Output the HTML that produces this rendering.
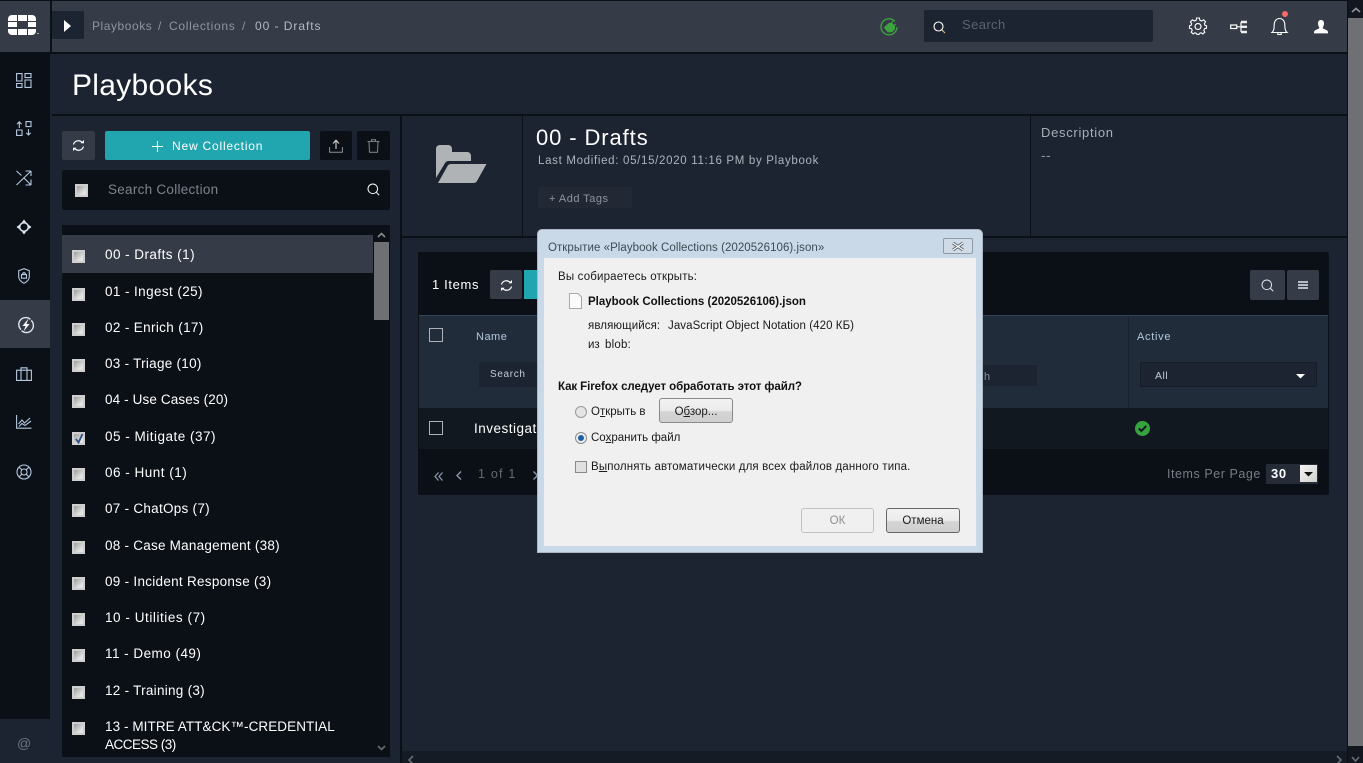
<!DOCTYPE html>
<html><head><meta charset="utf-8">
<style>
html,body{margin:0;padding:0;width:1363px;height:763px;overflow:hidden;background:#1c2331}
body{position:relative;font-family:"Liberation Sans",sans-serif;color:#fff}
.b{position:absolute}
.t{position:absolute;white-space:nowrap;line-height:18px;font-size:13.5px;letter-spacing:.4px}
.cb{position:absolute;left:72px;width:9px;height:9px;border:2px solid #cfcfcf;background:linear-gradient(135deg,#9c9c9c,#e4e4e4 75%);}
.d{position:absolute;white-space:nowrap;color:#1a1a1a;font-size:11.5px;line-height:14px}
svg{position:absolute;overflow:visible}
.s{fill:none;stroke:#b4c8e0;stroke-width:1.1}
u{text-decoration:underline}
.btn{position:absolute;background:#353b47;border-radius:2px}
.dk{position:absolute;background:#0b0f16;border-radius:2px}
.wb{position:absolute;border:1px solid #8a8a8a;border-radius:3px;background:linear-gradient(#f2f2f2 0,#ebebeb 50%,#d5d5d5 55%,#cfcfcf 100%);text-align:center;color:#1a1a1a;font-size:11.5px;box-sizing:border-box}
</style></head><body>

<!-- header -->
<div class="b" style="left:0;top:0;width:1363px;height:1px;background:#0b0f16"></div>
<div class="b" style="left:0;top:1px;width:1348px;height:51px;background:#353b47"></div>
<div class="b" style="left:50px;top:0;width:2px;height:52px;background:#0b0f16"></div>
<div class="b" style="left:0;top:52px;width:1348px;height:2px;background:#0b0f16"></div>
<!-- logo -->
<div class="b" style="left:8px;top:15px;width:9px;height:6px;background:#fff;border-radius:4px 0 0 0"></div>
<div class="b" style="left:18px;top:15px;width:9px;height:6px;background:#fff"></div>
<div class="b" style="left:28px;top:15px;width:8px;height:6px;background:#fff;border-radius:0 4px 0 0"></div>
<div class="b" style="left:8px;top:22px;width:9px;height:5px;background:#fff"></div>
<div class="b" style="left:28px;top:22px;width:8px;height:5px;background:#fff"></div>
<div class="b" style="left:8px;top:29px;width:9px;height:6px;background:#fff;border-radius:0 0 0 4px"></div>
<div class="b" style="left:18px;top:29px;width:9px;height:6px;background:#fff"></div>
<div class="b" style="left:28px;top:29px;width:8px;height:6px;background:#fff;border-radius:0 0 4px 0"></div>
<div class="b" style="left:37px;top:33px;width:2px;height:1px;background:#aab"></div>
<!-- toggle -->
<div class="b" style="left:52px;top:11px;width:32px;height:28px;background:#1c2331;border-radius:0 2px 2px 0"></div>
<svg style="left:64px;top:20px" width="8" height="12"><path d="M0 0L7 6L0 12Z" fill="#fff"/></svg>
<div class="t" style="left:92px;top:17px;font-size:12px;letter-spacing:.55px;color:#8e95a1">Playbooks</div>
<div class="t" style="left:158px;top:17px;font-size:12px;color:#8e95a1">/</div>
<div class="t" style="left:169px;top:17px;font-size:12px;letter-spacing:.7px;color:#8e95a1">Collections</div>
<div class="t" style="left:242px;top:17px;font-size:12px;color:#8e95a1">/</div>
<div class="t" style="left:255px;top:17px;font-size:12px;letter-spacing:.95px;color:#b4b9c1">00 - Drafts</div>
<!-- plug -->
<svg style="left:880px;top:18px" width="19" height="18" viewBox="0 0 19 18"><path d="M15 3.5A8 8 0 1 0 17 9" fill="none" stroke="#3da33f" stroke-width="1.3"/><path d="M4.5 9.5L9 5.5L12 5.5L14.5 8L14.5 11L12 13.5L8 14Z M11 5L13 3 M14 7.5L16 6" fill="#3da33f" stroke="#3da33f"/></svg>
<!-- global search -->
<div class="b" style="left:924px;top:10px;width:229px;height:32px;background:#1c2331;border-radius:2px"></div>
<svg style="left:933px;top:21px" width="13" height="13" viewBox="0 0 13 13"><circle cx="5.5" cy="5.5" r="4.5" fill="none" stroke="#fff" stroke-width="1.1"/><path d="M9 9L12 12" stroke="#e9c98a" stroke-width="1.1"/></svg>
<div class="t" style="left:962px;top:16px;font-size:13px;color:#5d6270">Search</div>
<!-- gear -->
<svg style="left:1189px;top:17px" width="18" height="18" viewBox="0 0 18 18"><path d="M7.6 1H10.4L10.9 3.3L12.6 4L14.6 2.8L16.6 4.8L15.3 6.8L16 8.3L17.5 8.8V11.2L15.5 11.7L14.8 13.3L15.8 15.2L13.8 16.9L12 15.8L10.5 16.4L10 17.4H8L7.5 16.4L6 15.8L4.2 16.9L2.2 15.2L3.2 13.3L2.5 11.7L.5 11.2V8.8L2 8.3L2.7 6.8L1.4 4.8L3.4 2.8L5.4 4L7.1 3.3Z" fill="none" stroke="#fff" stroke-width="1.1"/><circle cx="9" cy="9.5" r="3" fill="none" stroke="#fff" stroke-width="1.2"/></svg>
<!-- hierarchy -->
<svg style="left:1230px;top:20px" width="18" height="14" viewBox="0 0 18 14"><rect x=".7" y="5" width="6" height="3.5" fill="none" stroke="#fff" stroke-width="1.2"/><path d="M7 6.8H11M11 2V12" stroke="#fff" stroke-width="1.2" fill="none"/><path d="M11 2H17M11 6.8H17M11 12H17" stroke="#eee" stroke-width="2.4" fill="none"/></svg>
<!-- bell -->
<svg style="left:1271px;top:17px" width="17" height="19" viewBox="0 0 17 19"><path d="M1 15.5C3 14 3.2 11 3.2 8C3.2 4 5.5 1.5 8.5 1.5S13.8 4 13.8 8C13.8 11 14 14 16 15.5Z M6.8 15.5V17.5H10.2V15.5" fill="none" stroke="#fff" stroke-width="1.1"/></svg>
<div class="b" style="left:1282px;top:11px;width:6px;height:6px;border-radius:50%;background:#f36c6c"></div>
<!-- user -->
<svg style="left:1314px;top:20px" width="14" height="14" viewBox="0 0 14 14"><path d="M7 0C9 0 10 1.4 10 3.4C10 5.2 9.4 6.4 8.8 7.2V8.4L13 10.4C13.8 10.8 14 11.6 14 13.4H0C0 11.6.2 10.8 1 10.4L5.2 8.4V7.2C4.6 6.4 4 5.2 4 3.4C4 1.4 5 0 7 0Z" fill="#fff"/></svg>

<!-- sidebar -->
<div class="b" style="left:0;top:54px;width:50px;height:709px;background:#0b0f16"></div>
<div class="b" style="left:50px;top:54px;width:2px;height:709px;background:#1c2331"></div>
<div class="b" style="left:0;top:300px;width:50px;height:48px;background:#353b47"></div>
<div class="b" style="left:0;top:719px;width:50px;height:44px;background:#1c2331"></div>
<div class="t" style="left:17px;top:734px;font-size:14px;color:#6f7580;letter-spacing:0">@</div>
<svg style="left:16px;top:73px" width="16" height="15" viewBox="0 0 16 15"><path class="s" d="M.6.6H6V8H.6Z M9 .6H15V4.6H9Z M.6 10.5H6V14.4H.6Z M9 7H15V14.4H9Z"/></svg>
<svg style="left:16px;top:121px" width="16" height="15" viewBox="0 0 16 15"><path class="s" d="M10 .6H15V5.6H10Z M.6 9H6V14.4H.6Z M3.3 7V1M1 3.2L3.3 .8L5.6 3.2 M12.5 8V14M10.3 11.8L12.5 14L14.7 11.8"/></svg>
<svg style="left:16px;top:170px" width="16" height="16" viewBox="0 0 16 16"><path class="s" d="M.5 1L5.5 5.5M8 8L15 15M15 15V9.5M15 15H9.5 M.5 15L15 1M15 1H9.5M15 1V6"/></svg>
<svg style="left:17px;top:220px" width="14" height="14" viewBox="0 0 14 14"><circle cx="7" cy="7" r="4.3" fill="none" stroke="#dce6f2" stroke-width="1.5"/><path d="M7 -.5L9.2 2.4H4.8ZM7 14.5L4.8 11.6H9.2ZM-.5 7L2.4 4.8V9.2ZM14.5 7L11.6 9.2V4.8Z" fill="#dce6f2"/></svg>
<svg style="left:18px;top:268px" width="12" height="16" viewBox="0 0 12 16"><path class="s" d="M6 .7L11.3 2.6V8.5C11.3 11.5 9 13.8 6 15.2C3 13.8.7 11.5.7 8.5V2.6Z M3.5 6.6H8.5V10.2H3.5Z M4.5 6.6C4.5 4 7.5 4 7.5 6.6"/></svg>
<svg style="left:18px;top:317px" width="16" height="16" viewBox="0 0 16 16"><path d="M12.5 2.4A6.8 6.8 0 0 0 3 12.6M3.5 13.6A6.8 6.8 0 0 0 13.2 3.4" fill="none" stroke="#dfe8f2" stroke-width="1.4"/><path d="M10.5 1.5L4.5 9H7.6L5.5 14.5L11.5 7H8.4Z" fill="#fff"/></svg>
<svg style="left:16px;top:367px" width="16" height="14" viewBox="0 0 16 14"><path class="s" d="M.6 3.2H15.4V13.4H.6Z M5 3V.8H11V3 M5 3.2V13.4M11 3.2V13.4"/></svg>
<svg style="left:16px;top:415px" width="16" height="14" viewBox="0 0 16 14"><path class="s" d="M.6 0V13.2H15.5 M2.5 9L6 5L8.5 8L14 3 M3 11.5L6 8.5L9 10.5L15 6"/></svg>
<svg style="left:16px;top:464px" width="16" height="16" viewBox="0 0 16 16"><circle cx="8" cy="8" r="7" class="s"/><circle cx="8" cy="8" r="3" class="s"/><path class="s" d="M3 3L6 6M13 3L10 6M3 13L6 10M13 13L10 10"/></svg>

<!-- title -->
<div class="b" style="left:52px;top:114px;width:1296px;height:2px;background:#0b0f16"></div>
<div class="t" style="left:72px;top:66px;font-size:30px;line-height:40px;letter-spacing:.3px;color:#fff">Playbooks</div>

<!-- left toolbar -->
<div class="btn" style="left:62px;top:131px;width:33px;height:29px"></div>
<svg style="left:72px;top:139px" width="13" height="13" viewBox="0 0 13 13"><path d="M1.5 5.5A5 5 0 0 1 10.5 4M11.5 7.5A5 5 0 0 1 2.5 9" fill="none" stroke="#fff" stroke-width="1.2"/><path d="M8.5 4.3H12V1ZM4.5 8.7H1V12Z" fill="#fff"/></svg>
<div class="b" style="left:105px;top:131px;width:205px;height:29px;background:#21a6b0;border-radius:2px"></div>
<svg style="left:152px;top:141px" width="11" height="11"><path d="M5.5 0V11M0 5.5H11" stroke="#fff" stroke-width="1.1"/></svg>
<div class="t" style="left:172px;top:137px;font-size:12px;letter-spacing:.8px">New Collection</div>
<div class="dk" style="left:320px;top:131px;width:32px;height:29px"></div>
<svg style="left:329px;top:139px" width="14" height="14" viewBox="0 0 14 14"><path d="M.6 8V13.2H13.4V8" fill="none" stroke="#8d9198" stroke-width="1"/><path d="M7 10V2M4 4.5L7 1.2L10 4.5" fill="none" stroke="#d8d0cc" stroke-width="1.1"/></svg>
<div class="dk" style="left:357px;top:131px;width:33px;height:29px"></div>
<svg style="left:367px;top:139px" width="13" height="14" viewBox="0 0 13 14"><path d="M.5 2.5H12.5M4.5 2.5V.7H8.5V2.5M2 2.5L2.5 13.3H10.5L11 2.5" fill="none" stroke="#767c87" stroke-width="1.1"/></svg>
<!-- search collection -->
<div class="dk" style="left:62px;top:170px;width:328px;height:40px"></div>
<div class="cb" style="left:75px;top:184px"></div>
<div class="t" style="left:108px;top:181px;font-size:13.5px;letter-spacing:.27px;color:#7e828b">Search Collection</div>
<svg style="left:367px;top:183px" width="13" height="13" viewBox="0 0 13 13"><circle cx="5.8" cy="5.8" r="4.8" fill="none" stroke="#fff" stroke-width="1"/><path d="M9.2 9.2L12.2 12.2" stroke="#ddd" stroke-width="1.1"/></svg>

<!-- list -->
<div class="dk" style="left:62px;top:225px;width:328px;height:532px;border-radius:0"></div>
<div class="b" style="left:62px;top:235px;width:311px;height:38px;background:#353b47"></div>
<div class="b" style="left:374px;top:242px;width:15px;height:78px;background:#6f7074"></div>
<svg style="left:377px;top:232px" width="9" height="6"><path d="M1 5L4.5 1.5L8 5" fill="none" stroke="#8b8d92" stroke-width="1.6"/></svg>
<svg style="left:377px;top:745px" width="9" height="6"><path d="M1 1L4.5 4.5L8 1" fill="none" stroke="#6a6c72" stroke-width="1.6"/></svg>

<div class="cb" style="top:250px"></div><div class="t" style="left:105px;top:246px;letter-spacing:.45px">00 - Drafts (1)</div>
<div class="cb" style="top:288px"></div><div class="t" style="left:105px;top:283px">01 - Ingest (25)</div>
<div class="cb" style="top:323px"></div><div class="t" style="left:105px;top:319px;letter-spacing:.35px">02 - Enrich (17)</div>
<div class="cb" style="top:359px"></div><div class="t" style="left:105px;top:355px;letter-spacing:.27px">03 - Triage (10)</div>
<div class="cb" style="top:395px"></div><div class="t" style="left:105px;top:391px;letter-spacing:.12px">04 - Use Cases (20)</div>
<div class="cb" style="top:432px"></div><svg style="left:75px;top:433px" width="9" height="11"><path d="M1 6L3.5 9.5L7.5 1" fill="none" stroke="#2c4f86" stroke-width="1.8"/></svg><div class="t" style="left:105px;top:428px;letter-spacing:.5px">05 - Mitigate (37)</div>
<div class="cb" style="top:468px"></div><div class="t" style="left:105px;top:464px;letter-spacing:.5px">06 - Hunt (1)</div>
<div class="cb" style="top:504px"></div><div class="t" style="left:105px;top:500px;letter-spacing:.27px">07 - ChatOps (7)</div>
<div class="cb" style="top:541px"></div><div class="t" style="left:105px;top:537px;letter-spacing:.24px">08 - Case Management (38)</div>
<div class="cb" style="top:577px"></div><div class="t" style="left:105px;top:573px;letter-spacing:.28px">09 - Incident Response (3)</div>
<div class="cb" style="top:613px"></div><div class="t" style="left:105px;top:609px;letter-spacing:.55px">10 - Utilities (7)</div>
<div class="cb" style="top:649px"></div><div class="t" style="left:105px;top:645px;letter-spacing:.47px">11 - Demo (49)</div>
<div class="cb" style="top:686px"></div><div class="t" style="left:105px;top:682px;letter-spacing:.27px">12 - Training (3)</div>
<div class="cb" style="top:722px"></div><div class="t" style="left:105px;top:718px;letter-spacing:.07px">13 - MITRE ATT&amp;CK™-CREDENTIAL</div>
<div class="t" style="left:105px;top:736px;letter-spacing:-.5px">ACCESS (3)</div>

<!-- right panel -->
<div class="b" style="left:400px;top:116px;width:2px;height:647px;background:#0b0f16"></div>
<div class="b" style="left:402px;top:236px;width:946px;height:2px;background:#0b0f16"></div>
<div class="b" style="left:522px;top:116px;width:1px;height:120px;background:#0b0f16"></div>
<div class="b" style="left:1030px;top:116px;width:1px;height:120px;background:#0b0f16"></div>
<svg style="left:435px;top:144px" width="52" height="40" viewBox="0 0 52 40"><path d="M1 34V5C1 2.5 2.5 1 5 1H13C15.5 1 17 2.5 17 5V8H32C34.5 8 36 9.5 36 12V17H14C11.5 17 10.5 18 9.5 20Z" fill="#b0b3b5"/><path d="M3 39L12.5 22C13.5 20.5 14.5 20 16 20H51.5L42 37C41 38.5 40 39 38 39Z" fill="#b0b3b5"/></svg>
<div class="t" style="left:536px;top:126px;font-size:22px;line-height:24px;letter-spacing:.9px">00 - Drafts</div>
<div class="t" style="left:538px;top:152px;font-size:11.5px;letter-spacing:.68px;color:#aeb4bc">Last Modified: 05/15/2020 11:16 PM by Playbook</div>
<div class="b" style="left:538px;top:187px;width:94px;height:21px;background:#222935"></div>
<div class="t" style="left:549px;top:190px;font-size:11px;letter-spacing:.5px;color:#8e95a0">+ Add Tags</div>
<div class="t" style="left:1041px;top:124px;font-size:13px;letter-spacing:.7px;color:#a9afb8">Description</div>
<div class="t" style="left:1041px;top:146px;font-size:14px;color:#8e939b">--</div>

<!-- grid card -->
<div class="b" style="left:418px;top:252px;width:911px;height:243px;background:#0b0f16;border-radius:2px"></div>
<div class="t" style="left:432px;top:276px;font-size:13px;letter-spacing:.65px">1 Items</div>
<div class="btn" style="left:490px;top:270px;width:32px;height:29px"></div>
<svg style="left:500px;top:279px" width="13" height="13" viewBox="0 0 13 13"><path d="M1.5 5.5A5 5 0 0 1 10.5 4M11.5 7.5A5 5 0 0 1 2.5 9" fill="none" stroke="#fff" stroke-width="1.2"/><path d="M8.5 4.3H12V1ZM4.5 8.7H1V12Z" fill="#fff"/></svg>
<div class="b" style="left:524px;top:270px;width:20px;height:29px;background:#21a6b0"></div>
<div class="btn" style="left:1250px;top:270px;width:35px;height:30px"></div>
<svg style="left:1261px;top:279px" width="13" height="13" viewBox="0 0 13 13"><circle cx="5.8" cy="5.8" r="4.8" fill="none" stroke="#dfe8f2" stroke-width="1"/><path d="M9.2 9.2L12.2 12.2" stroke="#ddd" stroke-width="1.1"/></svg>
<div class="btn" style="left:1287px;top:270px;width:32px;height:30px"></div>
<svg style="left:1298px;top:281px" width="10" height="8"><path d="M0 1H10M0 4H10M0 7H10" stroke="#dfe8f2" stroke-width="1.4"/></svg>
<!-- table head -->
<div class="b" style="left:419px;top:315px;width:909px;height:93px;background:#212c3b;border-top:1px solid #33435a;box-sizing:border-box"></div>
<div class="b" style="left:1128px;top:316px;width:1px;height:92px;background:#1a2230"></div>
<div class="b" style="left:429px;top:328px;width:12px;height:12px;border:1px solid #aeb2b8"></div>
<div class="t" style="left:476px;top:328px;font-size:11px;letter-spacing:.5px;color:#b5c7de">Name</div>
<div class="b" style="left:479px;top:362px;width:70px;height:25px;background:#1c2331"></div>
<div class="t" style="left:490px;top:366px;font-size:10px;letter-spacing:.65px;color:#c0cbd8">Search</div>
<div class="b" style="left:960px;top:365px;width:77px;height:21px;background:#1c2331"></div>
<div class="t" style="left:984px;top:368px;font-size:11px;letter-spacing:0;color:#8a93a0">h</div>
<div class="t" style="left:1137px;top:328px;font-size:11px;letter-spacing:.7px;color:#b5c7de">Active</div>
<div class="b" style="left:1140px;top:362px;width:177px;height:25px;background:#1c2331;border:1px solid #171d28;box-sizing:border-box"></div>
<div class="t" style="left:1155px;top:367px;font-size:10.5px;letter-spacing:.5px;color:#c0cbd8">All</div>
<svg style="left:1296px;top:374px" width="9" height="5"><path d="M0 0H9L4.5 4.5Z" fill="#fff"/></svg>
<!-- row -->
<div class="b" style="left:419px;top:408px;width:909px;height:41px;background:#12181f"></div>
<div class="b" style="left:429px;top:421px;width:12px;height:12px;border:1px solid #aeb2b8"></div>
<div class="t" style="left:474px;top:420px;font-size:13.5px;letter-spacing:.5px">Investigat</div>
<svg style="left:1135px;top:421px" width="15" height="15" viewBox="0 0 15 15"><circle cx="7.5" cy="7.5" r="7.5" fill="#36a33f"/><path d="M3.8 7.5L6.4 10L11.2 5" fill="none" stroke="#101820" stroke-width="2"/></svg>
<!-- pager -->
<svg style="left:434px;top:472px" width="9" height="9"><path d="M4.5 .5L1 4.5L4.5 8.5M8.5 .5L5 4.5L8.5 8.5" fill="none" stroke="#8c97a7" stroke-width="1.3"/></svg>
<svg style="left:456px;top:471px" width="6" height="9"><path d="M5 .5L1 4.5L5 8.5" fill="none" stroke="#8c97a7" stroke-width="1.4"/></svg>
<div class="t" style="left:478px;top:465px;font-size:12.5px;letter-spacing:1.2px;color:#646a74">1 of 1</div>
<svg style="left:533px;top:471px" width="5" height="9"><path d="M.5 .5L4.5 4.5L.5 8.5" fill="none" stroke="#8c97a7" stroke-width="1.4"/></svg>
<div class="t" style="left:1167px;top:465px;font-size:12.5px;letter-spacing:.55px;color:#777c86">Items Per Page</div>
<div class="b" style="left:1266px;top:464px;width:52px;height:20px;background:#252c38"></div>
<div class="t" style="left:1271px;top:465px;font-size:13px;letter-spacing:.6px;font-weight:bold">30</div>
<div class="b" style="left:1300px;top:465px;width:17px;height:17px;background:linear-gradient(135deg,#f5f5f5,#cfd0cc)"></div>
<svg style="left:1304px;top:472px" width="9" height="5"><path d="M0 0H9L4.5 4.5Z" fill="#111"/></svg>

<!-- scrollbars -->
<div class="b" style="left:1347px;top:0;width:16px;height:763px;background:#6f7074;border-left:1px solid #0b0f16;box-sizing:border-box"></div>
<div class="b" style="left:1348px;top:0;width:15px;height:18px;background:#12171f"></div>
<svg style="left:1351px;top:7px" width="10" height="6"><path d="M1 5L5 1.5L9 5" fill="none" stroke="#8b8d92" stroke-width="1.8"/></svg>
<div class="b" style="left:1348px;top:746px;width:15px;height:17px;background:#12171f"></div>
<svg style="left:1351px;top:756px" width="9" height="6"><path d="M1 1L4.5 5L8 1" fill="none" stroke="#6a6c72" stroke-width="1.6"/></svg>
<div class="b" style="left:402px;top:751px;width:945px;height:12px;background:#151b25"></div>
<svg style="left:408px;top:756px" width="6" height="7"><path d="M5 0L1 4L5 8" fill="none" stroke="#6a6c72" stroke-width="1.6"/></svg>
<svg style="left:1336px;top:756px" width="6" height="7"><path d="M1 0L5 4L1 8" fill="none" stroke="#6a6c72" stroke-width="1.6"/></svg>

<!-- dialog -->
<div class="b" style="left:537px;top:229px;width:446px;height:324px;background:#c9d9e7;border:1px solid #aab6c1;border-radius:5px 5px 0 0;box-sizing:border-box"></div>
<div class="b" style="left:544px;top:258px;width:432px;height:288px;background:#f0f0f0"></div>
<div class="d" style="left:548px;top:241px;color:#3e4a55;font-size:11.5px;letter-spacing:.05px">Открытие «Playbook Collections (2020526106).json»</div>
<div class="b" style="left:943px;top:238px;width:30px;height:16px;border:1px solid #8e9aa6;border-radius:2px;box-sizing:border-box;background:#cfdbe6"></div>
<svg style="left:952px;top:242px" width="12" height="9"><path d="M1 1L11 8M11 1L1 8" stroke="#5a6068" stroke-width="3"/><path d="M1 1L11 8M11 1L1 8" stroke="#fff" stroke-width="1.2"/></svg>
<div class="d" style="left:558px;top:270px;letter-spacing:.17px">Вы собираетесь открыть:</div>
<svg style="left:569px;top:293px" width="13" height="16" viewBox="0 0 13 16"><path d="M.5.5H9L12.5 4V15.5H.5Z" fill="#fbfbfb" stroke="#a9a9a9"/></svg>
<div class="d" style="left:588px;top:295px;font-weight:bold;color:#111;letter-spacing:0">Playbook Collections (2020526106).json</div>
<div class="d" style="left:588px;top:319px;letter-spacing:.1px">являющийся:</div>
<div class="d" style="left:668px;top:319px;letter-spacing:.07px">JavaScript Object Notation (420 КБ)</div>
<div class="d" style="left:588px;top:338px">из</div>
<div class="d" style="left:605px;top:338px;letter-spacing:.2px">blob:</div>
<div class="d" style="left:558px;top:380px;font-weight:bold;color:#111;letter-spacing:-.08px">Как Firefox следует обработать этот файл?</div>
<div class="b" style="left:575px;top:406px;width:10px;height:10px;border:1px solid #9a9a9a;border-radius:50%;background:#e4e4e4"></div>
<div class="d" style="left:591px;top:405px">О<u>т</u>крыть в</div>
<div class="wb" style="left:659px;top:398px;width:74px;height:25px;line-height:26px">О<u>б</u>зор...</div>
<div class="b" style="left:575px;top:432px;width:10px;height:10px;border:1px solid #8a8a8a;border-radius:50%;background:#eee"></div>
<div class="b" style="left:578px;top:435px;width:6px;height:6px;border-radius:50%;background:#1b5fa8"></div>
<div class="d" style="left:591px;top:431px">Со<u>х</u>ранить файл</div>
<div class="b" style="left:575px;top:461px;width:10px;height:10px;border:1px solid #8a8a8a;background:#e0e0e0"></div>
<div class="d" style="left:591px;top:460px;letter-spacing:.14px">В<u>ы</u>полнять автоматически для всех файлов данного типа.</div>
<div class="wb" style="left:801px;top:508px;width:73px;height:25px;line-height:25px;color:#8d9094;background:#f0f0f0;border-color:#c2c2c2">ОК</div>
<div class="wb" style="left:886px;top:508px;width:74px;height:25px;line-height:25px;border-color:#666">Отмена</div>

</body></html>
